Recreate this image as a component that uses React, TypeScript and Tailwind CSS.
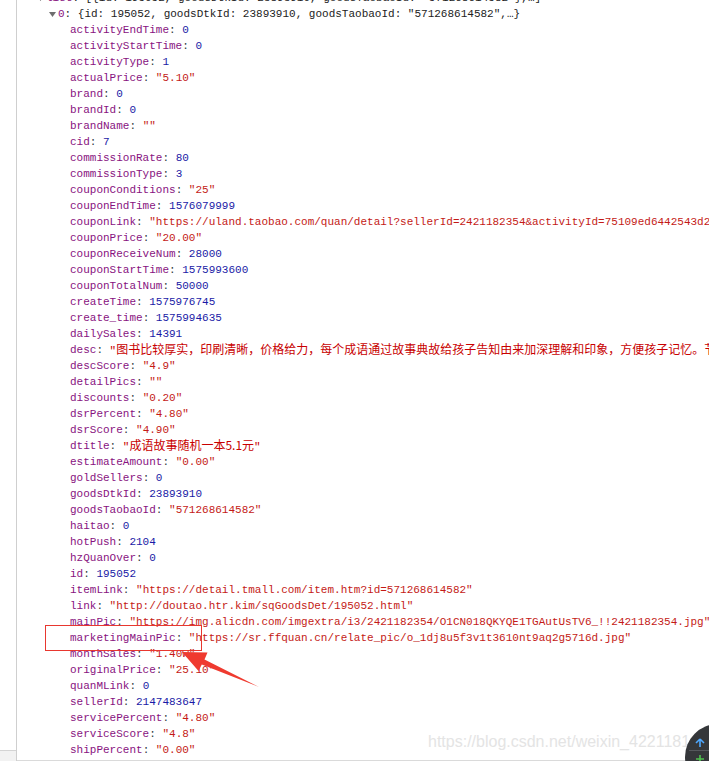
type Kind = 'num' | 'str' | 'cjk';

interface Row {
  k: string;
  v: string;
  t: Kind;
}

const rows: Row[] = [
  { k: 'activityEndTime', v: '0', t: 'num' },
  { k: 'activityStartTime', v: '0', t: 'num' },
  { k: 'activityType', v: '1', t: 'num' },
  { k: 'actualPrice', v: '5.10', t: 'str' },
  { k: 'brand', v: '0', t: 'num' },
  { k: 'brandId', v: '0', t: 'num' },
  { k: 'brandName', v: '', t: 'str' },
  { k: 'cid', v: '7', t: 'num' },
  { k: 'commissionRate', v: '80', t: 'num' },
  { k: 'commissionType', v: '3', t: 'num' },
  { k: 'couponConditions', v: '25', t: 'str' },
  { k: 'couponEndTime', v: '1576079999', t: 'num' },
  { k: 'couponLink', v: 'https://uland.taobao.com/quan/detail?sellerId=2421182354&activityId=75109ed6442543d2b9e0a1c', t: 'str' },
  { k: 'couponPrice', v: '20.00', t: 'str' },
  { k: 'couponReceiveNum', v: '28000', t: 'num' },
  { k: 'couponStartTime', v: '1575993600', t: 'num' },
  { k: 'couponTotalNum', v: '50000', t: 'num' },
  { k: 'createTime', v: '1575976745', t: 'num' },
  { k: 'create_time', v: '1575994635', t: 'num' },
  { k: 'dailySales', v: '14391', t: 'num' },
  { k: 'desc', v: '图书比较厚实，印刷清晰，价格给力，每个成语通过故事典故给孩子告知由来加深理解和印象，方便孩子记忆。节假日送给孩子的好礼物', t: 'cjk' },
  { k: 'descScore', v: '4.9', t: 'str' },
  { k: 'detailPics', v: '', t: 'str' },
  { k: 'discounts', v: '0.20', t: 'str' },
  { k: 'dsrPercent', v: '4.80', t: 'str' },
  { k: 'dsrScore', v: '4.90', t: 'str' },
  { k: 'dtitle', v: '成语故事随机一本5.1元', t: 'cjk' },
  { k: 'estimateAmount', v: '0.00', t: 'str' },
  { k: 'goldSellers', v: '0', t: 'num' },
  { k: 'goodsDtkId', v: '23893910', t: 'num' },
  { k: 'goodsTaobaoId', v: '571268614582', t: 'str' },
  { k: 'haitao', v: '0', t: 'num' },
  { k: 'hotPush', v: '2104', t: 'num' },
  { k: 'hzQuanOver', v: '0', t: 'num' },
  { k: 'id', v: '195052', t: 'num' },
  { k: 'itemLink', v: 'https://detail.tmall.com/item.htm?id=571268614582', t: 'str' },
  { k: 'link', v: 'http://doutao.htr.kim/sqGoodsDet/195052.html', t: 'str' },
  { k: 'mainPic', v: 'https://img.alicdn.com/imgextra/i3/2421182354/O1CN018QKYQE1TGAutUsTV6_!!2421182354.jpg', t: 'str' },
  { k: 'marketingMainPic', v: 'https://sr.ffquan.cn/relate_pic/o_1dj8u5f3v1t3610nt9aq2g5716d.jpg', t: 'str' },
  { k: 'monthSales', v: '1.40w', t: 'str' },
  { k: 'originalPrice', v: '25.10', t: 'str' },
  { k: 'quanMLink', v: '0', t: 'num' },
  { k: 'sellerId', v: '2147483647', t: 'num' },
  { k: 'servicePercent', v: '4.80', t: 'str' },
  { k: 'serviceScore', v: '4.8', t: 'str' },
  { k: 'shipPercent', v: '0.00', t: 'str' },
];

function Caret() {
  return (
    <svg width="10" height="16" viewBox="0 0 10 16" className="shrink-0">
      <path d="M1 6 L8 6 L4.5 11 Z" fill="#6e6e6e" />
    </svg>
  );
}

function Value({ row }: { row: Row }) {
  if (row.t === 'num') return <span className="text-[#1a1aa6]">{row.v}</span>;
  if (row.t === 'cjk')
    return (
      <span className="text-[#c80000]">
        "<span className="font-['Noto_Sans_CJK_SC',sans-serif] text-[12px]">{row.v}</span>"
      </span>
    );
  return <span className="text-[#c41a16]">"{row.v}"</span>;
}

export default function App() {
  return (
    <div className="relative flex h-[761px] w-[709px] overflow-hidden bg-white font-['Liberation_Mono',monospace] text-[11px] leading-[16px] text-[#222]">
      <div className="flex w-[17px] shrink-0 flex-col justify-end border-r border-[#cfcfcf]">
        <div className="h-[11px] border-t border-[#d4d4d4] bg-[#f2f2f2]" />
      </div>

      <div className="flex min-w-0 flex-1 flex-col border-b border-[#dadada]">
        <div className="-mt-[10px] flex flex-col">
          <div className="flex h-4 items-center whitespace-nowrap pl-[19px]">
            <Caret />
            <span className="text-[#881280]">list</span>
            <span>: [&#123;id: 195052, goodsDtkId: 23893910, goodsTaobaoId: "571268614582"&#125;,…]</span>
          </div>
          <div className="flex h-4 items-center whitespace-nowrap pl-[31px]">
            <Caret />
            <span className="text-[#881280]">0</span>
            <span>: &#123;id: 195052, goodsDtkId: 23893910, goodsTaobaoId: "571268614582",…&#125;</span>
          </div>
          {rows.map((row) => (
            <div key={row.k} className="flex h-4 items-center whitespace-nowrap pl-[53px]">
              <span className="text-[#881280]">{row.k}</span>
              <span className="whitespace-pre text-[#303942]">: </span>
              <Value row={row} />
            </div>
          ))}
        </div>
      </div>

      {/* annotation: red box + arrow */}
      <div className="absolute left-[45px] top-[625px] h-[26px] w-[157px] border border-[#e8372f]" />
      <svg className="absolute left-0 top-0" width="709" height="761" viewBox="0 0 709 761">
        <path
          d="M259 687 L204.5 659.5 L207.5 652.5 L182 652 L198.5 671 L201.8 664.5 Z"
          fill="#ef3a2f"
        />
      </svg>

      {/* watermark */}
      <div className="absolute left-[428px] top-[732px] font-['Liberation_Sans',sans-serif] text-[16px] leading-[20px] text-[#e4e4e4]">
        https://blog.csdn.net/weixin_42211816
      </div>

      {/* floating toolbar */}
      <div className="absolute left-[685px] top-[724px] flex h-[66px] w-[66px] flex-col rounded-full bg-[#35373a]">
        <div className="flex h-[26px] items-end pl-[10px] pb-[2px]">
          <svg width="10" height="10" viewBox="0 0 10 10">
            <path d="M5 1 L9 5 M5 1 L1 5 M5 1 L5 9" stroke="#4ea8ff" strokeWidth="1.6" fill="none" />
          </svg>
        </div>
        <div className="ml-[4px] h-px w-[40px] bg-[#55585c]" />
        <div className="flex pl-[11px] pt-[4px]">
          <svg width="8" height="8" viewBox="0 0 8 8">
            <path d="M4 0 L4 8 M0 4 L8 4" stroke="#4fc04f" strokeWidth="1.6" />
          </svg>
        </div>
      </div>
    </div>
  );
}
